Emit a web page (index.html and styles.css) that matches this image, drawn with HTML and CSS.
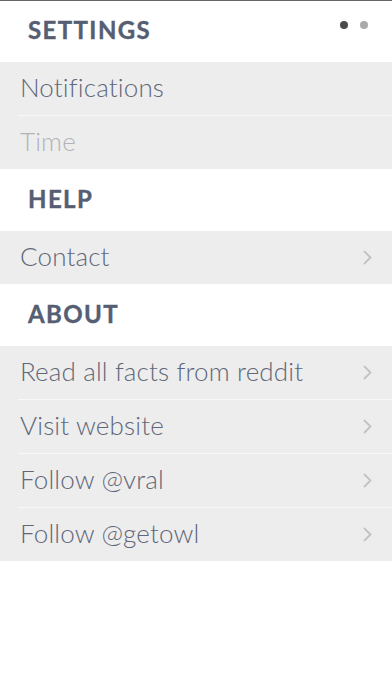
FILE: index.html
```html
<!DOCTYPE html>
<html>
<head>
<meta charset="utf-8">
<link rel="stylesheet" href="styles.css">
</head>
<body>
<div class="screen">
  <section class="section first">
    <header class="head">
      <h2 class="title">SETTINGS</h2>
      <div class="dots"><span class="dot on"></span><span class="dot"></span></div>
    </header>
    <ul class="list">
      <li class="row"><span class="label">Notifications</span></li>
      <li class="row"><span class="label muted">Time</span></li>
    </ul>
  </section>
  <section class="section">
    <header class="head"><h2 class="title">HELP</h2></header>
    <ul class="list">
      <li class="row"><span class="label">Contact</span><svg class="chev" viewBox="0 0 9 15"><path d="M1 1l6.5 6.5L1 14"/></svg></li>
    </ul>
  </section>
  <section class="section">
    <header class="head"><h2 class="title">ABOUT</h2></header>
    <ul class="list">
      <li class="row"><span class="label">Read all facts from reddit</span><svg class="chev" viewBox="0 0 9 15"><path d="M1 1l6.5 6.5L1 14"/></svg></li>
      <li class="row"><span class="label">Visit website</span><svg class="chev" viewBox="0 0 9 15"><path d="M1 1l6.5 6.5L1 14"/></svg></li>
      <li class="row"><span class="label">Follow @vral</span><svg class="chev" viewBox="0 0 9 15"><path d="M1 1l6.5 6.5L1 14"/></svg></li>
      <li class="row"><span class="label">Follow @getowl</span><svg class="chev" viewBox="0 0 9 15"><path d="M1 1l6.5 6.5L1 14"/></svg></li>
    </ul>
  </section>
</div>
</body>
</html>
```
FILE: styles.css
```css
* { box-sizing: border-box; }
html, body { margin: 0; padding: 0; background: #fff; }
body { font-family: Lato, "Open Sans", sans-serif; }
.screen {
  width: 392px;
  min-height: 696px;
  border-top: 1px solid #666;
  display: flex;
  flex-direction: column;
}
.head {
  height: 62px;
  display: flex;
  align-items: center;
  justify-content: space-between;
  padding: 0 24px 3px 28px;
}
.first .head { height: 61px; }
.title {
  margin: 0;
  font-size: 24px;
  line-height: 1;
  font-weight: 700;
  letter-spacing: 1.4px;
  -webkit-text-stroke: 0.4px #555e72;
  color: #555e72;
}
.dots { display: flex; gap: 12px; align-self: flex-start; margin-top: 20px; }
.dot { width: 8px; height: 8px; border-radius: 50%; background: #aaaaaa; }
.dot.on { background: #4b4b4b; }
.list {
  list-style: none;
  margin: 0;
  padding: 0;
  background: #ededed;
}
.row {
  height: 53px;
  display: flex;
  align-items: center;
  justify-content: space-between;
  padding: 0 20px 3px 20px;
}
.row + .row { height: 54px; border-top: 1px solid #f8f8f8; margin-left: 18px; padding-left: 2px; }
.label {
  font-size: 26px;
  line-height: 1;
  font-weight: 300;
  letter-spacing: 0.15px;
  color: #5f6779;
}
.label.muted { color: #b2b3b8; }
.chev {
  width: 9px;
  height: 15px;
  margin-top: 3px;
  fill: none;
  stroke: #c2c2c2;
  stroke-width: 1.8;
}
```
